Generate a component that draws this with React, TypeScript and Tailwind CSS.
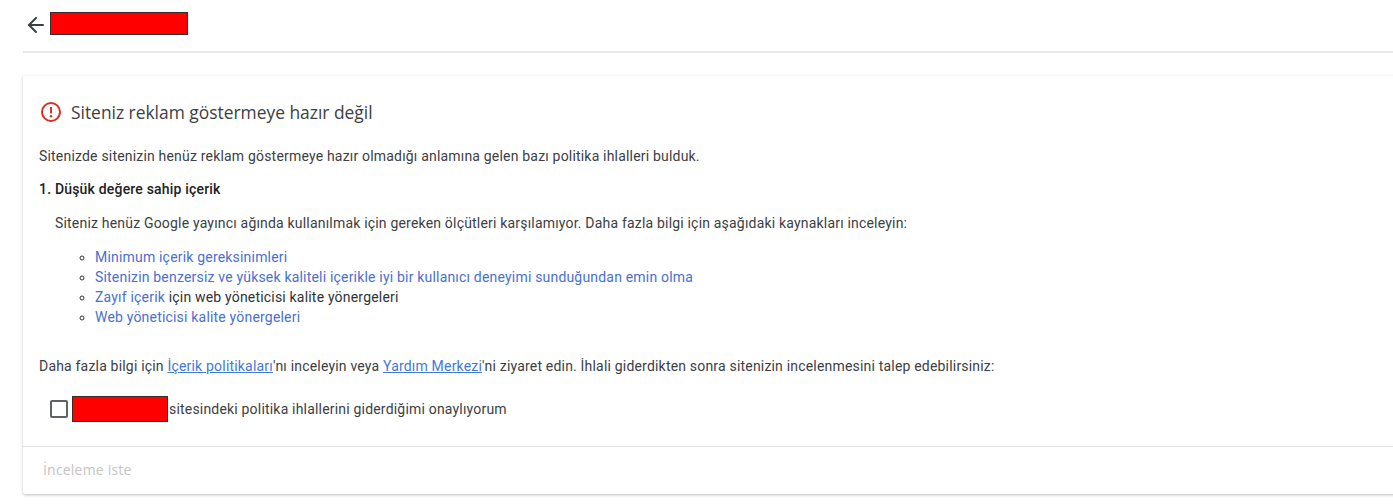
import React from "react";
import { ArrowLeft } from "lucide-react";

const Redacted = ({ className }: { className: string }) => (
  <div className={`bg-[#ff0000] border border-[#3a2a2a] ${className}`} />
);

const linkClass = "text-[#4a6fd0]";

export default function App() {
  return (
    <div className="h-[504px] w-full overflow-hidden bg-white pl-[23px] font-['Roboto',sans-serif] text-[14px] leading-5 tracking-[0.19px] text-[#3c4043]">
      <header className="flex h-[53px] items-start border-b-2 border-[#e8e8e8] pt-3">
        <ArrowLeft className="mt-[1px] ml-[1px] h-6 w-6 text-[#3c4043]" strokeWidth={2} />
        <Redacted className="ml-[2px] h-[23px] w-[138px]" />
      </header>

      <section className="mt-[23px] -mr-2 h-[418px] rounded-[2px] bg-white shadow-[0_1px_3px_rgba(60,64,67,0.35)]">
        <div className="flex items-center pl-[17px] pt-[24px]">
          <svg viewBox="0 0 24 24" className="h-[22px] w-[22px]" fill="none">
            <circle cx="12" cy="12" r="9.8" stroke="#d93025" strokeWidth="2.2" />
            <path d="M12 6.5v7" stroke="#d93025" strokeWidth="2.2" />
            <circle cx="12" cy="16.6" r="1.3" fill="#d93025" />
          </svg>
          <h1 className="ml-[9px] font-['Open_Sans',sans-serif] text-[17.4px] leading-6 tracking-normal text-[#3c4043]">
            Siteniz reklam göstermeye hazır değil
          </h1>
        </div>

        <div className="pl-4 pt-[22px]">
          <p>Sitenizde sitenizin henüz reklam göstermeye hazır olmadığı anlamına gelen bazı politika ihlalleri bulduk.</p>
          <p className="mt-[13px] font-medium text-[#202124]">1. Düşük değere sahip içerik</p>
          <p className="mt-[14px] pl-4">
            Siteniz henüz Google yayıncı ağında kullanılmak için gereken ölçütleri karşılamıyor. Daha fazla bilgi için aşağıdaki kaynakları inceleyin:
          </p>
          <ul className="mt-[14px] list-[circle] pl-14 text-[#2f3235]">
            <li><span className={linkClass}>Minimum içerik gereksinimleri</span></li>
            <li><span className={linkClass}>Sitenizin benzersiz ve yüksek kaliteli içerikle iyi bir kullanıcı deneyimi sunduğundan emin olma</span></li>
            <li><span className={linkClass}>Zayıf içerik</span> için web yöneticisi kalite yönergeleri</li>
            <li><span className={linkClass}>Web yöneticisi kalite yönergeleri</span></li>
          </ul>
          <p className="mt-[29px]">
            Daha fazla bilgi için <a className="text-[#3f79d8] underline">İçerik politikaları</a>'nı inceleyin veya{" "}
            <a className="text-[#3f79d8] underline">Yardım Merkezi</a>'ni ziyaret edin. İhlali giderdikten sonra sitenizin incelenmesini talep edebilirsiniz:
          </p>
          <div className="mt-[20px] flex items-center pl-[11px]">
            <span className="h-[18px] w-[18px] rounded-[2px] border-2 border-[#5f6368]" />
            <Redacted className="ml-[4px] h-[26px] w-[96px]" />
            <span className="ml-[1px]">sitesindeki politika ihlallerini giderdiğimi onaylıyorum</span>
          </div>
        </div>

        <footer className="mt-[24px] border-t border-[#e3e3e3] pl-5 pt-[13px]">
          <button className="font-['Open_Sans',sans-serif] text-[14px] leading-5 tracking-[0.2px] text-[#c4c4c4]">İnceleme iste</button>
        </footer>
      </section>
    </div>
  );
}
